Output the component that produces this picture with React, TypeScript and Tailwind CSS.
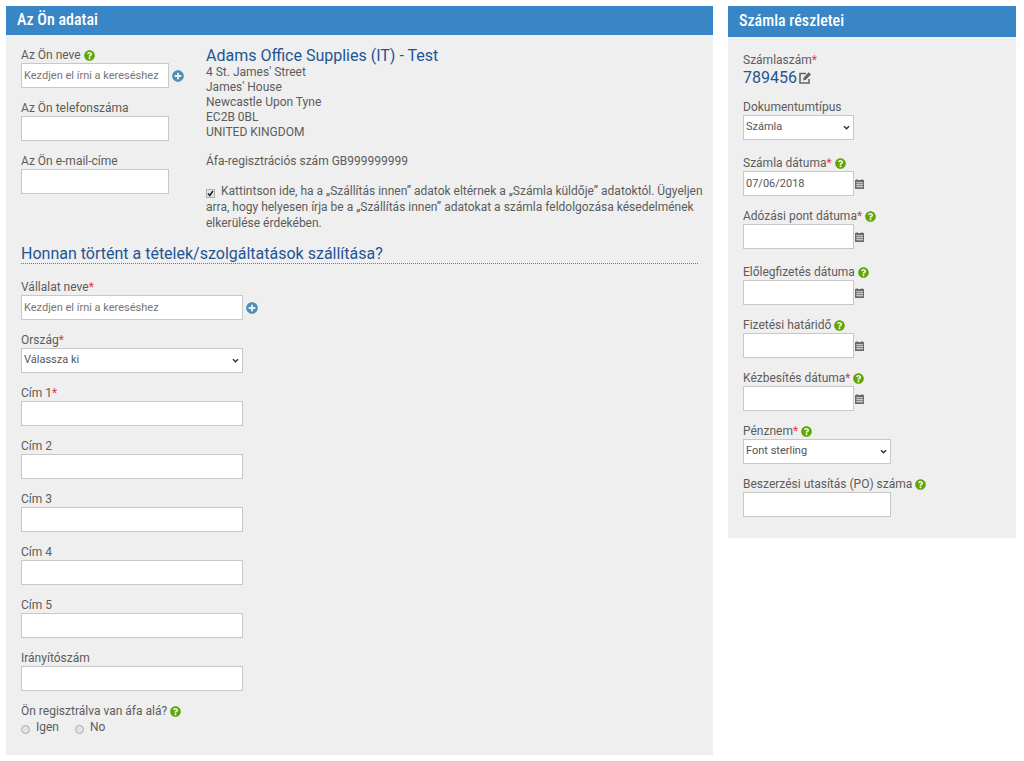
import { useState } from "react";
import type { ReactNode } from "react";
import { FaPlusCircle, FaQuestionCircle } from "react-icons/fa";

const inputClass =
  "block h-[25px] border border-[#c8c8c8] bg-white px-[2px] text-[11px] text-[#555] placeholder:text-[#757575] focus:outline-none focus:border-[#3886c6]";

function CalendarIcon() {
  return (
    <svg className="w-[9px] h-[10px]" viewBox="0 0 9 10" fill="none">
      <path d="M0 1h9v9H0z" fill="#6b6b6b" />
      <path d="M2 0v2M7 0v2" stroke="#6b6b6b" />
      <path d="M1 3.5h7M1 5.5h7M1 7.5h7" stroke="#efefef" strokeWidth="0.6" />
      <path d="M3 3.5v5.5M5 3.5v5.5M7 3.5v5.5" stroke="#efefef" strokeWidth="0.5" />
    </svg>
  );
}

function EditIcon() {
  return (
    <svg className="w-3 h-3" viewBox="0 0 12 12" fill="none">
      <path d="M7 1.5H1v9.5h9V7" stroke="#666" strokeWidth="1.6" />
      <path d="M4 8.5l.6-2.8L9.6.2 12 2.4 6.9 7.8z" fill="#666" />
    </svg>
  );
}

function Help() {
  return (
    <button type="button" aria-label="Súgó" className="shrink-0">
      <FaQuestionCircle className="w-[11px] h-[11px] text-[#5fa800]" />
    </button>
  );
}

function AddButton() {
  return (
    <button type="button" aria-label="Hozzáadás" className="shrink-0">
      <FaPlusCircle className="w-3 h-3 text-[#4a8fb8]" />
    </button>
  );
}

type FieldProps = {
  id: string;
  label: string;
  required?: boolean;
  help?: boolean;
  children: ReactNode;
};

function Field({ id, label, required, help, children }: FieldProps) {
  return (
    <div>
      <div className="flex items-center gap-[3px] h-4">
        <label htmlFor={id} className="text-[12px] leading-4">
          {label}
          {required && <span className="text-[#e8384f]">*</span>}
        </label>
        {help && <Help />}
      </div>
      {children}
    </div>
  );
}

type SelectProps = { id: string; options: string[]; className: string };

function Select({ id, options, className }: SelectProps) {
  return (
    <div className={`relative ${className}`}>
      <select id={id} className={`${inputClass} w-full appearance-none`}>
        {options.map((o) => (
          <option key={o}>{o}</option>
        ))}
      </select>
      <svg className="absolute right-1 top-[10px] w-[7px] h-[6px] pointer-events-none" viewBox="0 0 7 6" fill="none">
        <path d="M1 1.3l2.5 2.5L6 1.3" stroke="#333" strokeWidth="1.5" />
      </svg>
    </div>
  );
}

function DateField({ id, label, required, value = "" }: { id: string; label: string; required?: boolean; value?: string }) {
  return (
    <Field id={id} label={label} required={required} help>
      <div className="flex items-center gap-[1px]">
        <input id={id} type="text" defaultValue={value} className={`${inputClass} w-[111px]`} />
        <button type="button" aria-label="Naptár megnyitása">
          <CalendarIcon />
        </button>
      </div>
    </Field>
  );
}

const cimek = [
  { id: "cim1", label: "Cím 1", required: true },
  { id: "cim2", label: "Cím 2" },
  { id: "cim3", label: "Cím 3" },
  { id: "cim4", label: "Cím 4" },
  { id: "cim5", label: "Cím 5" },
  { id: "irsz", label: "Irányítószám" },
];

export default function App() {
  const [elteroSzallitas, setElteroSzallitas] = useState(true);
  const [afa, setAfa] = useState("");

  return (
    <main className="grid grid-cols-[minmax(0,1fr)_288px] items-start gap-[15px] p-[6px] pr-2 bg-white text-[#5c5c5c] font-['Roboto',sans-serif]">
      <section className="bg-[#efefef]">
        <h2 className="h-[29px] px-[11px] bg-[#3886c6] text-white text-[16px] leading-7 font-medium font-['Roboto_Condensed','Roboto',sans-serif]">
          Az Ön adatai
        </h2>
        <div className="px-[15px] pt-3 pb-5">
          <div className="flex">
            <div className="w-[185px] shrink-0 flex flex-col gap-3">
              <Field id="nev" label="Az Ön neve" help>
                <div className="flex items-center gap-[3px]">
                  <input id="nev" type="text" placeholder="Kezdjen el írni a kereséshez" className={`${inputClass} w-[148px]`} />
                  <AddButton />
                </div>
              </Field>
              <Field id="telefon" label="Az Ön telefonszáma">
                <input id="telefon" type="tel" className={`${inputClass} w-[148px]`} />
              </Field>
              <Field id="email" label="Az Ön e-mail-címe">
                <input id="email" type="email" className={`${inputClass} w-[148px]`} />
              </Field>
            </div>

            <div className="min-w-0 -mr-3 text-[12px] leading-[15px]">
              <h3 className="text-[16px] leading-[18px] text-[#1f5594]">Adams Office Supplies (IT) - Test</h3>
              <address className="not-italic">
                4 St. James' Street
                <br />
                James' House
                <br />
                Newcastle Upon Tyne
                <br />
                EC2B 0BL
                <br />
                UNITED KINGDOM
              </address>
              <p className="my-[14px]">Áfa-regisztrációs szám GB999999999</p>
              <label className="block leading-4">
                <span className="relative inline-block w-[9px] h-[9px] mr-[6px] align-[-3px]">
                  <input
                    type="checkbox"
                    checked={elteroSzallitas}
                    onChange={(e) => setElteroSzallitas(e.target.checked)}
                    className="peer block w-[9px] h-[9px] appearance-none border border-[#b0b0b0] bg-[#e4e4e4]"
                  />
                  <svg className="hidden peer-checked:block absolute inset-0 w-[9px] h-[9px] pointer-events-none" viewBox="0 0 9 9" fill="none">
                    <path d="M2 4.5l1.8 2L7 2" stroke="#222" strokeWidth="1.6" />
                  </svg>
                </span>
                Kattintson ide, ha a „Szállítás innen” adatok eltérnek a „Számla küldője” adatoktól. Ügyeljen arra, hogy
                helyesen írja be a „Szállítás innen” adatokat a számla feldolgozása késedelmének elkerülése érdekében.
              </label>
            </div>
          </div>

          <h3 className="mt-[13px] mb-[15px] border-b border-dotted border-[#777] text-[16px] leading-[19px] text-[#1f5594]">
            Honnan történt a tételek/szolgáltatások szállítása?
          </h3>

          <div className="flex flex-col gap-3">
            <Field id="vallalat" label="Vállalat neve" required>
              <div className="flex items-center gap-[3px]">
                <input id="vallalat" type="text" placeholder="Kezdjen el írni a kereséshez" className={`${inputClass} w-[222px]`} />
                <AddButton />
              </div>
            </Field>
            <Field id="orszag" label="Ország" required>
              <Select id="orszag" options={["Válassza ki", "Magyarország", "Egyesült Királyság"]} className="w-[222px]" />
            </Field>
            {cimek.map((c) => (
              <Field key={c.id} id={c.id} label={c.label} required={c.required}>
                <input id={c.id} type="text" className={`${inputClass} w-[222px]`} />
              </Field>
            ))}
            <fieldset>
              <legend className="flex items-center gap-[3px] text-[12px] leading-4">
                Ön regisztrálva van áfa alá? <Help />
              </legend>
              <div className="flex gap-4 text-[12px] leading-4">
                {["Igen", "No"].map((v) => (
                  <label key={v} className="flex gap-[6px]">
                    <input
                      type="radio"
                      name="afa"
                      checked={afa === v}
                      onChange={() => setAfa(v)}
                      className="w-[9px] h-[9px] mt-[6px] appearance-none rounded-full border border-[#aaa] bg-[#e4e4e4] checked:bg-[#555]"
                    />
                    {v}
                  </label>
                ))}
              </div>
            </fieldset>
          </div>
        </div>
      </section>

      <section className="bg-[#efefef]">
        <h2 className="h-[31px] px-[11px] bg-[#3886c6] text-white text-[16px] leading-[30px] font-medium font-['Roboto_Condensed','Roboto',sans-serif]">
          Számla részletei
        </h2>
        <div className="px-[15px] pt-[15px] pb-[21px] flex flex-col gap-[15px]">
          <div className="flex flex-col gap-3">
            <div>
              <div className="text-[12px] leading-4">
                Számlaszám<span className="text-[#e8384f]">*</span>
              </div>
              <div className="flex items-center gap-[2px] text-[16px] leading-[19px] text-[#1f5594]">
                789456
                <button type="button" aria-label="Számlaszám szerkesztése">
                  <EditIcon />
                </button>
              </div>
            </div>
            <Field id="tipus" label="Dokumentumtípus">
              <Select id="tipus" options={["Számla", "Jóváírás"]} className="w-[111px]" />
            </Field>
          </div>
          <div className="flex flex-col gap-3">
            <DateField id="szamla-datum" label="Számla dátuma" required value="07/06/2018" />
            <DateField id="adozasi-pont" label="Adózási pont dátuma" required />
          </div>
          <div className="flex flex-col gap-3">
            <DateField id="eloleg" label="Előlegfizetés dátuma" />
            <DateField id="hatarido" label="Fizetési határidő" />
            <DateField id="kezbesites" label="Kézbesítés dátuma" required />
            <Field id="penznem" label="Pénznem" required help>
              <Select id="penznem" options={["Font sterling", "Euró", "Forint"]} className="w-[148px]" />
            </Field>
            <Field id="po" label="Beszerzési utasítás (PO) száma" help>
              <input id="po" type="text" className={`${inputClass} w-[148px]`} />
            </Field>
          </div>
        </div>
      </section>
    </main>
  );
}
